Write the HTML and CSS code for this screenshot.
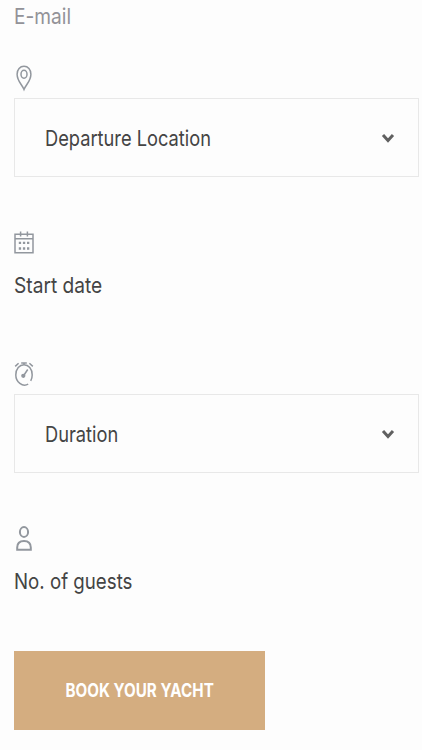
FILE: index.html
```
<!DOCTYPE html>
<html lang="en">
<head>
<meta charset="utf-8">
<meta name="viewport" content="width=device-width, initial-scale=1">
<title>Book your yacht</title>
<link rel="stylesheet" href="styles.css">
</head>
<body>
<form class="booking">
  <label class="email"><span class="text text-email">E-mail</span></label>

  <div class="field field-select">
    <svg class="icon" viewBox="0 0 20 28"><path d="M10 25.5C8 20.5 3.1 17 3.1 10.2C3.1 5.4 6 2.2 10 2.2s6.9 3.2 6.9 8C16.9 17 12 20.5 10 25.5z"/><ellipse cx="10" cy="10.3" rx="3" ry="4"/></svg>
    <div class="select"><span class="text text-location">Departure Location</span>
      <svg class="chevron" viewBox="0 0 14 12"><path d="M2 3l5 5.5L12 3"/></svg></div>
  </div>

  <div class="field field-plain">
    <svg class="icon" viewBox="0 0 20 28"><path d="M1 6.2h18v18.5H1zM1 10.8h18M6.6 3.5v5M13.4 3.5v5"/><path class="dots" d="M4.8 14.8h2.3M8.9 14.8h2.3M13 14.8h2.3M4.8 20.5h2.3M8.9 20.5h2.3M13 20.5h2.3"/></svg>
    <span class="text text-date">Start date</span>
  </div>

  <div class="field field-select">
    <svg class="icon" viewBox="0 0 20 28"><path d="M14.2 24.2C8.5 27.3 1.8 22.2 1.8 15C1.8 8.7 5.5 4.7 10 4.7s8.2 4 8.2 10.3c0 2.2-.6 4.2-1.5 5.8M7.2 3h5.6M10 3v2M1.2 6.4l3.4-3.2M15.4 3.2l3.4 3.2M13.7 9.5L9.4 16"/><circle class="fill" cx="9.3" cy="15.8" r="1.4"/></svg>
    <div class="select"><span class="text text-duration">Duration</span>
      <svg class="chevron" viewBox="0 0 14 12"><path d="M2 3l5 5.5L12 3"/></svg></div>
  </div>

  <div class="field field-plain">
    <svg class="icon person" viewBox="0 0 20 28"><ellipse cx="10" cy="8" rx="4.1" ry="4.9"/><path d="M3.2 25.7v-2.2c0-4.3 2.8-6.6 6.8-6.6s6.8 2.3 6.8 6.6v2.2z"/></svg>
    <span class="text text-guests">No. of guests</span>
  </div>

  <button class="submit" type="button"><span class="text text-submit">BOOK YOUR YACHT</span></button>
</form>
</body>
</html>
```
FILE: styles.css
```
* { box-sizing: border-box; }
body {
  margin: 0;
  height: 750px;
  overflow: hidden;
  background: #fdfdfd;
  color: #444;
  font-family: Inter, "Open Sans", sans-serif;
}
.booking { padding: 0 3px 0 14px; }
.text {
  display: block;
  width: max-content;
  font-size: 22px;
  line-height: 32px;
  white-space: nowrap;
  transform-origin: left center;
}
.email { display: block; height: 64px; color: #929298; }
.icon {
  display: block;
  width: 20px;
  height: 28px;
  fill: none;
  stroke: #92979e;
  stroke-width: 1.5;
}
.icon .dots { stroke-width: 2.3; }
.icon .fill { fill: #92979e; }
.person { stroke-width: 2; }
.field-select { height: 164px; }
.field-select .icon { margin-bottom: 6px; }
.select {
  display: flex;
  align-items: center;
  justify-content: space-between;
  height: 79px;
  padding: 0 23px 0 30px;
  border: 1px solid #e8e8e8;
}
.chevron {
  width: 14px;
  height: 12px;
  fill: none;
  stroke: #606060;
  stroke-width: 3;
}
.field-plain { height: 132px; }
.field-plain .icon { margin-bottom: 13px; }
.submit {
  display: flex;
  align-items: center;
  justify-content: center;
  width: 251px;
  height: 79px;
  margin-top: -5px;
  padding: 0;
  border: 0;
  background: #d4ad80;
  color: #fff;
  font-family: inherit;
}
.text-email { transform: scaleX(0.87); }
.text-location { transform: scaleX(0.83); }
.text-date { transform: scaleX(0.87); }
.text-duration { transform: scaleX(0.83); }
.text-guests { transform: scaleX(0.85); }
.text-submit {
  font-size: 19px;
  font-weight: 700;
  transform: scaleX(0.8);
  transform-origin: center;
}
```
